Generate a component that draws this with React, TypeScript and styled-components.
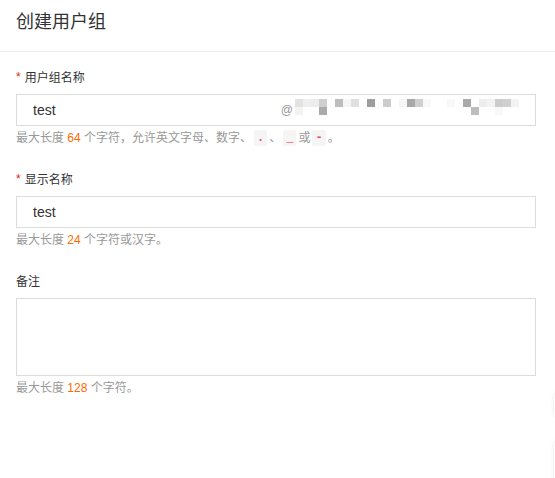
import React from "react";
import styled, { createGlobalStyle } from "styled-components";

const GlobalStyle = createGlobalStyle`
  html, body {
    margin: 0;
    padding: 0;
    background: #ffffff;
  }
  body {
    font-family: "Liberation Sans", "Noto Sans CJK SC", sans-serif;
    color: #333333;
    overflow: hidden;
  }
  * { box-sizing: border-box; }
`;

const Page = styled.div`
  width: 555px;
  height: 478px;
  background: #fff;
  position: relative;
  overflow: hidden;
`;

const Header = styled.div`
  padding: 10px 16px 17px;
  border-bottom: 1px solid #ebebeb;
`;

const Title = styled.h1`
  margin: 0;
  font-size: 18px;
  line-height: 24px;
  font-weight: 400;
  color: #333;
`;

const Form = styled.form`
  padding: 16px 19px 0 16px;
  display: flex;
  flex-direction: column;
  gap: 22px;
`;

const Field = styled.div`
  display: flex;
  flex-direction: column;
`;

const Label = styled.label`
  font-size: 12px;
  line-height: 20px;
  color: #333;
  margin-bottom: 6px;
  display: flex;
  align-items: center;
`;

const Required = styled.span`
  color: #e62412;
  font-size: 12px;
  margin-right: 4px;
  position: relative;
  top: -1px;
`;

const InputBox = styled.div<{ $tall?: boolean }>`
  height: ${(p) => (p.$tall ? "78px" : "32px")};
  border: 1px solid #dcdcdc;
  display: flex;
  align-items: ${(p) => (p.$tall ? "flex-start" : "center")};
  padding: 0 16px;
  background: #fff;
`;

const InputText = styled.span`
  flex: 1;
  font-size: 14px;
  color: #333;
  font-family: "Liberation Sans", "Noto Sans CJK SC", sans-serif;
`;

const Suffix = styled.span`
  display: flex;
  align-items: center;
  color: #999;
  font-size: 12px;
  gap: 2px;
`;

const Help = styled.div`
  margin-top: 2px;
  font-size: 12px;
  line-height: 20px;
  color: #999;
  display: flex;
  align-items: center;
  white-space: pre;
`;

const Num = styled.span`
  color: #ff6a00;
`;

const Code = styled.code`
  display: inline-block;
  background: #f5f5f5;
  color: #eb4d72;
  font-family: "Liberation Mono", monospace;
  font-size: 12px;
  font-weight: 700;
  line-height: 16px;
  padding: 0 3px;
  border-radius: 2px;
  margin: 0 2px;
`;

const FloatTab = styled.div<{ $top: number; $h: number }>`
  position: absolute;
  left: 554px;
  top: ${(p) => p.$top}px;
  width: 40px;
  height: ${(p) => p.$h}px;
  border-radius: 4px;
  background: #fff;
  box-shadow: 0 0 4px rgba(0, 0, 0, 0.1);
`;

type Block = [number, number, string];
const blocks: Block[] = [
  [294, 0, "#e2e2e2"],
  [302, 0, "#efefef"],
  [310, 0, "#ececec"],
  [318, 0, "#cfcfcf"],
  [294, 1, "#f3f3f3"],
  [318, 1, "#ababab"],
  [334, 0, "#bdbdbd"],
  [342, 0, "#f5f5f5"],
  [350, 0, "#e0e0e0"],
  [366, 0, "#9e9e9e"],
  [382, 0, "#cccccc"],
  [398, 0, "#f5f5f5"],
  [406, 0, "#a8a8a8"],
  [414, 0, "#cfcfcf"],
  [422, 0, "#f8f8f8"],
  [446, 0, "#f8f8f8"],
  [462, 0, "#aaaaaa"],
  [470, 1, "#bdbdbd"],
  [478, 0, "#eeeeee"],
  [486, 0, "#f3f3f3"],
  [494, 0, "#cccccc"],
  [502, 0, "#d0d0d0"],
  [510, 0, "#f3f3f3"],
  [494, 1, "#f8f8f8"],
];

const Mosaic = () => (
  <svg width="224" height="16" viewBox="294 0 224 16" style={{ display: "block", marginTop: -6 }}>
    {blocks.map(([x, r, c], i) => (
      <rect key={i} x={x} y={r * 8} width="8" height="8" fill={c} />
    ))}
  </svg>
);

export default function App() {
  return (
    <Page>
      <GlobalStyle />
      <Header>
        <Title>创建用户组</Title>
      </Header>
      <Form>
        <Field>
          <Label>
            <Required>*</Required>用户组名称
          </Label>
          <InputBox>
            <InputText>test</InputText>
            <Suffix>
              @<Mosaic />
            </Suffix>
          </InputBox>
          <Help>
            最大长度 <Num>64</Num> 个字符，允许英文字母、数字、<Code>.</Code>、<Code>_</Code>或<Code>-</Code>。
          </Help>
        </Field>
        <Field>
          <Label>
            <Required>*</Required>显示名称
          </Label>
          <InputBox>
            <InputText>test</InputText>
          </InputBox>
          <Help>
            最大长度 <Num>24</Num> 个字符或汉字。
          </Help>
        </Field>
        <Field>
          <Label>备注</Label>
          <InputBox $tall />
          <Help>
            最大长度 <Num>128</Num> 个字符。
          </Help>
        </Field>
      </Form>
      <FloatTab $top={393} $h={24} />
      <FloatTab $top={441} $h={60} />
    </Page>
  );
}
